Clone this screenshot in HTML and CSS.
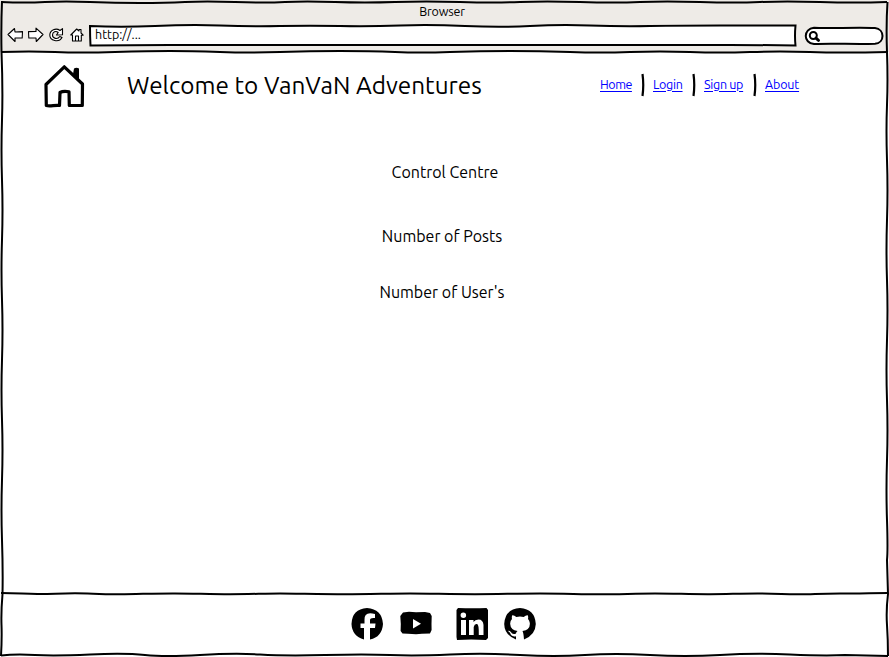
FILE: index.html
```
<!DOCTYPE html>
<html lang="en">
<head>
<meta charset="utf-8">
<title>VanVaN Adventures</title>
<link rel="stylesheet" href="styles.css">
</head>
<body>
<div class="window">
  <header class="chrome">
    <div class="title">Browser</div>
    <div class="toolbar">
      <svg class="controls" width="80" height="24" viewBox="5 24 80 24">
        <g class="thin">
          <path d="M8 34.5L14.5 28.5L15 32L22.5 31.6L22.2 38L15 38L15 41.5Z"/>
          <path d="M43 34.5L36 28.2L36 31.5L28.5 31.6L28.8 38L36 38L36.3 41.5Z"/>
          <path d="M60 30.5C56 27.5 50 30 49.8 35C49.8 41 59 43 62 37.5L59.8 36.5C57.5 40 52.5 38.500 52.500 35C52.500 31.500 56 30.500 58.200 32.500L56.500 35L62.500 34.800L62.500 28.600Z"/>
          <path d="M70.800 35L76.700 29L79 31V29.500H81V33L83.200 35.200H81.300V41H72.500V35Z M75.500 41V36H78.500V41"/>
        </g>
      </svg>
      <div class="address">http://...</div>
      <svg class="search" width="80" height="22" viewBox="804 25 80 22">
        <path class="box" d="M814 27.800C830 28.800 855 26.900 875 28C885 29 885 43 875 43.700C854 44.500 833 43 814 44C803 43 803 29 814 27.800Z"/>
        <circle class="lens" cx="813.300" cy="35.500" r="3.500"/>
        <path class="handle" d="M816 38.200L818.500 40.300"/>
      </svg>
    </div>
  </header>

  <main class="page">
    <div class="masthead">
      <svg class="home" width="46" height="48" viewBox="41 62 46 48">
        <path class="line" d="M46 84.500L64.300 66.800L82.500 84L82.300 105.500H69.300L69 91.800C66 91.200 62 91.400 60 92.500L59.500 105.500C55 104.900 50 106.500 46.300 105.500Z"/>
        <path d="M73 74L74 68.500Q76.500 67 79 68.500V80.500Z"/>
      </svg>
      <h1 class="brand">Welcome to VanVaN Adventures</h1>
      <nav class="nav">
        <a class="home-link" href="#">Home</a>
        <svg class="sep" width="4" height="24" viewBox="0 0 4 24"><path d="M1.500 1Q3 12 1.500 23"/></svg>
        <a class="login-link" href="#">Login</a>
        <svg class="sep" width="4" height="24" viewBox="0 0 4 24"><path d="M1.500 1Q3 12 1.500 23"/></svg>
        <a class="signup-link" href="#">Sign up</a>
        <svg class="sep" width="4" height="24" viewBox="0 0 4 24"><path d="M1.500 1Q3 12 1.500 23"/></svg>
        <a class="about-link" href="#">About</a>
      </nav>
    </div>
    <div class="content">
      <h2 class="heading">Control Centre</h2>
      <p class="posts">Number of Posts</p>
      <p class="users">Number of User's</p>
    </div>
  </main>

  <footer class="footer">
    <svg width="34" height="34" viewBox="0 0 34 34">
      <path d="M14 32.500Q2 29 1.500 17Q2 2 17 1Q32 2 33 17Q32 30 20 32.500V21H25L25.500 16.500H20V13Q20 10.500 25 11V7Q14 4 14.500 13V16.500H10.500V21H14Z"/>
    </svg>
    <svg width="34" height="34" viewBox="0 0 34 34">
      <path fill-rule="evenodd" d="M4 5.500L10 4.800L17 5.300L26 5L31 6L32.700 9L32.500 17L32.600 23L31 26.500L23 26.800L17 27.300L9 26.800L3.500 26.500L1.600 24L1.800 17L1.300 9ZM14 12V21.500L22 16.800Z"/>
    </svg>
    <svg class="linkedin" width="34" height="34" viewBox="0 0 34 34">
      <path fill-rule="evenodd" d="M3 1Q18 1.500 31.500 1L33 3V31L31 33Q16 32 2 33L1.500 30V3ZM6 13V28H11V13ZM8.300 5.500A2.700 2.700 0 1 0 8.400 11A2.700 2.700 0 1 0 8.300 5.500ZM14 13V28H18.700V20Q19.500 16.500 22 17Q24 17 23.800 28H28.500V18Q28 12.500 23.500 12.500Q20 12.500 18.500 15V13Z"/>
    </svg>
    <svg width="34" height="34" viewBox="0 0 34 34">
      <path d="M13 32.400Q1.500 28 1.200 17Q2 2 17 1Q32 2 32.800 17Q32.500 28 21 32.400Q20.500 26 19.500 24Q27.500 23 26.800 16Q26.500 13.500 25 12Q25.500 10 24.700 8.300Q23 8 20.700 10Q17 9 13.300 10Q11 8 9.300 8.300Q8.500 10 9 12Q7 14 7.200 17Q7.500 23 14.500 24Q13 25 13 26.500Q9.500 28 7.800 25Q6.500 23.300 4.800 24Q7.500 25.500 8 28Q10 30 13 29.200Z"/>
    </svg>
  </footer>

  <svg class="sketch" width="889" height="657" viewBox="0 0 889 657">
    <path d="M1 2Q25 3 45 2T90 2T140 3T185 2T235 2T285 2T335 2T395 2T460 2T520 2T580 2T640 2T700 2T760 2T820 2T887 2"/>
    <path d="M1 52Q30 51 55 52T115 52T170 51T220 52T280 52T340 51T395 52T450 52T510 51T570 52T630 52T690 52T750 52T810 52T888 52"/>
    <path d="M1 593C20 593 25 594.200 40 594S60 593.300 75 593.300S100 594.500 120 594.300S155 593.300 175 593.400S210 594.200 230 594.200S265 593.500 280 593.500S320 594.300 345 594.300S390 593.500 410 593.500S450 594.200 475 594.200S515 593.500 540 593.500S580 594.300 600 594.300S635 593.500 655 593.500S690 594.300 710 594.200S740 593.300 760 593.400S785 594.500 800 594.300S825 593.300 845 593.500S870 593 888 593"/>
    <path d="M1 655.500Q15 654 35 655T90 654.500T145 655T200 655T260 654.500T325 655T390 655T450 654.500T520 655T585 655T650 655T720 655T790 654.500T845 655L888 656"/>
    <path d="M2 1Q1 25 1.500 52Q3 90 2 120T2 180T2 240T2 300T2 360T2 420T2 480T2 540T2.500 594Q1 612 1.500 625T1 656"/>
    <path d="M887.500 2Q886 25 887 52Q888 80 887 105T887 160T887 220T887 280T887 340T887 400T887 460T887 520T887 560L888 594Q886 610 887 625T888 656"/>
    <path d="M90 26Q120 27.500 155 26T220 25.500T280 26T340 26T400 25.500T465 26T530 26T590 25.500T650 26T720 25.500L795.500 25.500Q794.500 36 795.500 45.500Q765 45 730 45T660 45T590 45T520 45T450 45T380 45T310 45T240 45T170 45L90.500 45.500Q90 36 90 26Z"/>
  </svg>
</div>
</body>
</html>
```
FILE: styles.css
```
* { box-sizing: border-box; }
body { margin: 0; background: #fff; color: #000; font-family: "Ubuntu", "Noto Sans", sans-serif; }
.window { position: relative; width: 889px; height: 657px; display: grid; grid-template-rows: 52px 542px 63px; overflow: hidden; }
.chrome { background: #eeebe7; }
.title { height: 24px; text-align: center; font-size: 12.5px; line-height: 23px; padding-right: 5px; letter-spacing: -0.15px; }
.toolbar { display: flex; height: 24px; padding-left: 5px; }
.address { width: 706px; height: 20px; margin: 2px 8px 0 5px; background: #fff; padding-left: 5px; font-size: 12.5px; line-height: 17px; }
.thin { fill: #fff; stroke: #000; stroke-width: 1.1; stroke-linejoin: round; }
.search { margin-top: 1px; fill: none; stroke: #000; }
.box { fill: #fff; stroke-width: 2; }
.lens { stroke-width: 2; }
.handle { stroke-width: 3; stroke-linecap: round; }
.masthead { display: flex; height: 68px; padding: 10px 0 0 41px; }
.home .line { fill: none; stroke: #000; stroke-width: 3.2; stroke-linejoin: round; }
.brand { margin: 0 0 0 40px; width: 473px; font-size: 24.3px; font-weight: 400; line-height: 46px; white-space: nowrap; letter-spacing: 0.03px; }
.nav { display: flex; height: 46px; align-items: center; font-size: 12.5px; white-space: nowrap; letter-spacing: -0.3px; }
.nav a { color: #00f; height: 17px; line-height: 14px; text-decoration-thickness: 1px; text-underline-offset: 2px; }
.sep { margin: 0 8px 0 9px; fill: none; stroke: #000; stroke-width: 2.2; }
.nav .home-link { width: 32px; letter-spacing: -0.45px; }
.login-link { width: 30px; }
.signup-link { width: 40px; }
.nav .about-link { letter-spacing: -0.15px; }
.content { display: grid; justify-items: center; grid-template-rows: 64px 56px 30px; padding-top: 40px; font-size: 16px; line-height: 24px; }
.content h2, .content p { margin: 0; font-size: 16px; font-weight: 400; }
.content .heading { padding-left: 1px; }
.posts, .users { padding-right: 5px; }
.footer { display: flex; gap: 15px; align-items: center; padding: 0 0 3px 350px; }
.linkedin { margin: 0 -1px 0 7px; }
.sketch { position: absolute; inset: 0; fill: none; stroke: #000; stroke-width: 2; pointer-events: none; }
```
